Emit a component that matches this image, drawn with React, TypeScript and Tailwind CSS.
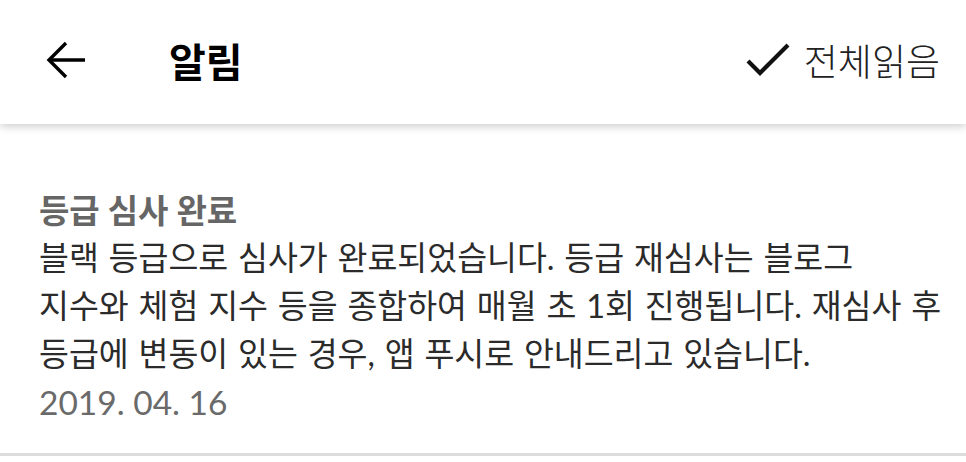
import React from "react";

const KR = '"Lato", "Noto Sans CJK KR", sans-serif';

export default function App() {
  return (
    <div className="w-[966px] h-[462px] bg-white overflow-hidden" style={{ fontFamily: KR }}>
      <header className="relative z-10 h-[124px] bg-white flex items-center pl-[46px] pr-[26px] pb-[4px] shadow-[0_3px_8px_rgba(0,0,0,0.18)]">
        <svg width="40" height="38" viewBox="0 0 40 38" fill="none" stroke="#000" strokeWidth="3.4" strokeLinecap="butt" strokeLinejoin="miter">
          <path d="M3 19H39" />
          <path d="M20 2L3 19L20 36" />
        </svg>
        <h1 className="ml-[83px] text-[40px] font-bold text-black leading-none" style={{ fontFamily: '"Noto Sans CJK KR", sans-serif' }}>
          알림
        </h1>
        <div className="ml-auto flex items-center">
          <svg width="44" height="34" viewBox="0 0 44 34" fill="none" stroke="#111" strokeWidth="4.2" strokeLinejoin="miter">
            <path d="M2 18L14 30L42 2" />
          </svg>
          <span className="ml-[14px] text-[37px] font-light text-[#222] leading-none" style={{ fontFamily: '"Noto Sans CJK KR", sans-serif' }}>
            전체읽음
          </span>
        </div>
      </header>
      <section className="pl-[39px] pt-[62px] pb-[27px] border-b-[3px] border-[#dcdcdc] leading-[48px]">
        <div className="text-[33px] font-bold text-[#666] whitespace-nowrap">등급 심사 완료</div>
        <div className="text-[32.5px] text-[#2b2b2b] whitespace-nowrap [word-spacing:1.5px]">
          <div>블랙 등급으로 심사가 완료되었습니다. 등급 재심사는 블로그</div>
          <div>지수와 체험 지수 등을 종합하여 매월 초 1회 진행됩니다. 재심사 후</div>
          <div>등급에 변동이 있는 경우, 앱 푸시로 안내드리고 있습니다.</div>
        </div>
        <div className="text-[33.5px] text-[#6a6a6a] whitespace-nowrap">2019. 04. 16</div>
      </section>
    </div>
  );
}
